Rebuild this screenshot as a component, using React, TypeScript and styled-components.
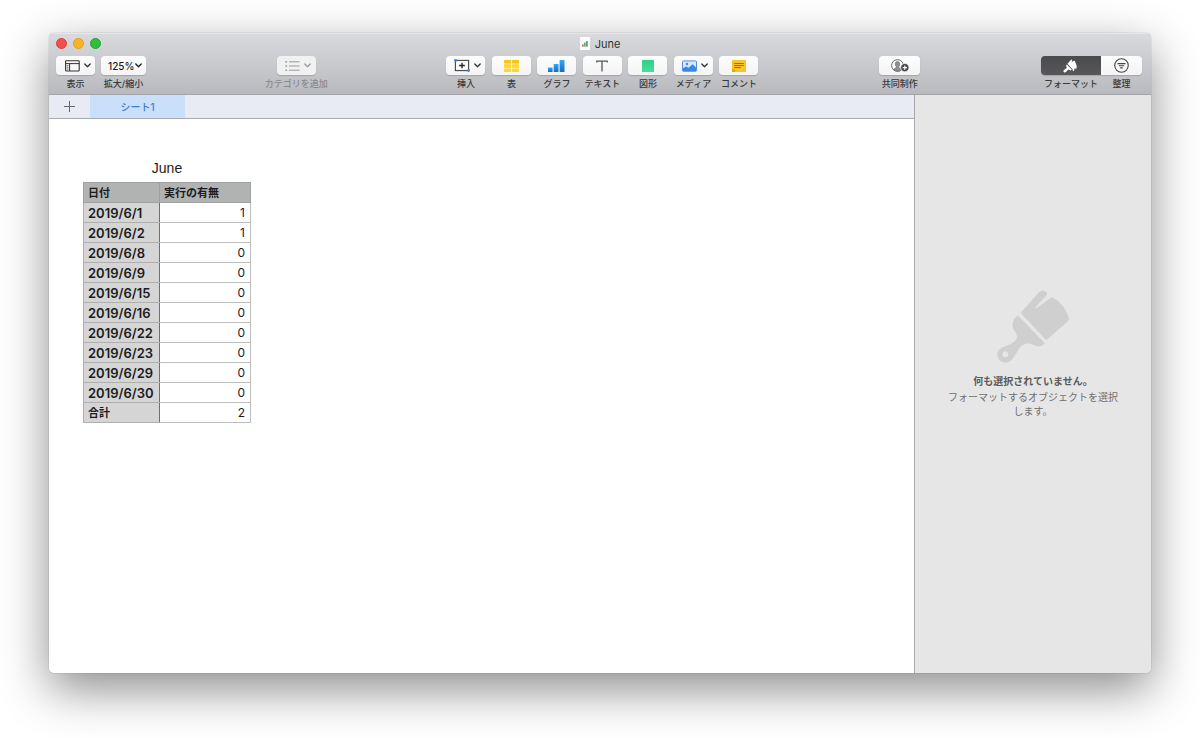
import React from "react";
import styled, { createGlobalStyle, css } from "styled-components";

const GlobalStyle = createGlobalStyle`
  *, *::before, *::after { box-sizing: border-box; }
  body {
    margin: 0;
    background: #fff;
    color: #1c1c1c;
    font-family: Inter, "Noto Sans CJK JP", sans-serif;
    -webkit-font-smoothing: antialiased;
  }
  button, select { font: inherit; color: inherit; }
`;

const Desktop = styled.div`
  display: flex;
  min-height: 100vh;
  padding: 33px 49px 65px;
`;

const AppWindow = styled.div`
  flex: 1;
  min-width: 0;
  display: flex;
  flex-direction: column;
  overflow: hidden;
  border-radius: 5px;
  background: #fff;
  box-shadow: 0 0 1px rgba(0, 0, 0, 0.5), 0 16px 48px rgba(0, 0, 0, 0.46);
`;

const WindowHeader = styled.header`
  display: flex;
  flex-direction: column;
  border-bottom: 1px solid #a3a4a8;
  background: linear-gradient(#d9dadd, #b9babf);
  box-shadow: inset 0 1px 0 #e6e7e9;
`;

const TitleBar = styled.div`
  display: grid;
  grid-template-columns: 1fr auto 1fr;
  align-items: center;
  height: 21px;
  padding: 0 7px;
`;

const TrafficLights = styled.div`
  display: flex;
  gap: 6px;
`;

const Light = styled.button<{ $fill: string; $edge: string }>`
  width: 11px;
  height: 11px;
  padding: 0;
  border: 1px solid ${(p) => p.$edge};
  border-radius: 50%;
  background: ${(p) => p.$fill};
`;

const DocumentTitle = styled.h1`
  display: flex;
  align-items: center;
  gap: 5px;
  margin: 0;
  font-size: 11px;
  line-height: 14px;
  font-weight: 400;
  color: #333;
`;

const Toolbar = styled.div`
  display: flex;
  justify-content: space-between;
  height: 40px;
  padding: 2px 9px 0 7px;
`;

const ToolGroup = styled.div<{ $joined?: boolean }>`
  display: flex;
  gap: ${(p) => (p.$joined ? 0 : 6)}px;
  margin-left: ${(p) => (p.$joined ? 2 : 0)}px;
`;

const InsertGroup = styled.div`
  display: flex;
  justify-content: space-between;
  width: 312px;
  margin-right: 2px;
`;

const toolItem = css`
  display: flex;
  flex-direction: column;
  align-items: center;
  gap: 2px;
  padding: 0;
  border: 0;
  background: none;
`;

const ToolButton = styled.button<{ $width?: number }>`
  ${toolItem}
  width: ${(p) => (p.$width ? `${p.$width}px` : "auto")};
`;

const ToolField = styled.label`
  ${toolItem}
  position: relative;
`;

const faceStyle = css`
  height: 19px;
  border: 0;
  border-radius: 4px;
  background: linear-gradient(#fdfdfd, #f4f4f5);
  box-shadow: 0 1px 1px rgba(0, 0, 0, 0.16);
`;

type Side = "left" | "right";

const Face = styled.span<{ $width: number; $menu?: boolean; $active?: boolean; $faded?: boolean; $side?: Side }>`
  ${faceStyle}
  display: flex;
  align-items: center;
  justify-content: center;
  gap: 4px;
  width: ${(p) => p.$width}px;
  padding-left: ${(p) => (p.$menu ? 4 : 0)}px;
  color: #333;
  ${(p) => p.$faded && css`color: #9b9b9d; background: #f1f1f2;`}
  ${(p) => p.$active && css`color: #fff; background: linear-gradient(#4b4b4e, #57575a);`}
  ${(p) => p.$side === "left" && css`border-radius: 4px 0 0 4px;`}
  ${(p) => p.$side === "right" && css`border-radius: 0 4px 4px 0;`}
`;

const ZoomSelect = styled.select`
  ${faceStyle}
  appearance: none;
  width: 45px;
  padding: 0 0 0 7px;
  font-size: 10px;
  font-weight: 500;
`;

const SelectArrow = styled.span`
  position: absolute;
  top: 0;
  right: 4px;
  height: 19px;
  display: flex;
  align-items: center;
  pointer-events: none;
`;

const Caption = styled.span<{ $faded?: boolean }>`
  font-size: 9px;
  line-height: 14px;
  font-weight: 500;
  white-space: nowrap;
  color: ${(p) => (p.$faded ? "#88898c" : "#3a3a3c")};
`;

const Body = styled.div`
  flex: 1;
  display: flex;
`;

const Main = styled.main`
  flex: 1;
  min-width: 0;
  background: #fff;
`;

const SheetBar = styled.nav`
  display: flex;
  height: 24px;
  border-bottom: 1px solid #a9abb2;
  background: #e8ebf4;
`;

const AddSheet = styled.button`
  display: flex;
  align-items: center;
  justify-content: center;
  width: 41px;
  padding: 0;
  border: 0;
  background: none;
`;

const SheetTab = styled.button`
  width: 95px;
  padding: 0;
  border: 0;
  background: #cadffa;
  color: #3f7cc8;
  font-size: 10px;
  font-weight: 500;
`;

const Canvas = styled.div`
  padding: 40px 34px;
`;

const SheetTable = styled.table`
  border-collapse: collapse;
  table-layout: fixed;
  width: 167px;
  font-size: 12px;
  line-height: 16px;

  caption {
    padding-bottom: 5px;
    font-family: "Liberation Sans", Arial, sans-serif;
    font-size: 14px;
    line-height: 18px;
  }
`;

const ColumnHead = styled.th<{ $width: number }>`
  width: ${(p) => p.$width}px;
  height: 20px;
  padding: 0 4px;
  border: 1px solid #a0a2a1;
  background: #b0b3b2;
  text-align: left;
  font-size: 11px;
  font-weight: 700;
`;

const RowHead = styled.th<{ $label?: boolean }>`
  height: 20px;
  padding: 0 4px;
  border: 1px solid #b0b0b0;
  border-right-color: #707070;
  background: #d5d5d5;
  text-align: left;
  white-space: nowrap;
  font-size: ${(p) => (p.$label ? 11 : 13)}px;
  font-weight: ${(p) => (p.$label ? 700 : 600)};
`;

const Cell = styled.td`
  height: 20px;
  padding: 0 5px;
  border: 1px solid #bdbdbd;
  text-align: right;
`;

const Inspector = styled.aside`
  display: flex;
  flex-direction: column;
  align-items: center;
  width: 237px;
  padding: 194px 32px 0;
  border-left: 1px solid #a9a9ab;
  background: #e6e6e6;
  text-align: center;
  font-size: 10px;
  line-height: 14px;
  color: #6f6f6f;
`;

const InspectorTitle = styled.h2`
  margin: 10px 0 2px;
  font-size: 10px;
  line-height: 14px;
  font-weight: 700;
  color: #5c5c5c;
`;

const InspectorText = styled.p`
  margin: 0;
`;

const Chevron = () => (
  <svg width="7" height="5" viewBox="0 0 7 5" fill="none" stroke="currentColor" strokeWidth="1.3" strokeLinecap="round" strokeLinejoin="round">
    <path d="M.8 1 3.5 3.8 6.2 1" />
  </svg>
);

const DocumentIcon = () => (
  <svg width="10" height="13" viewBox="0 0 10 13">
    <rect width="10" height="13" rx="0.6" fill="#fbfbfb" />
    <path d="M2 9V7.4h1.7V9z" fill="#e0604a" />
    <path d="M4 9V5.6h1.7V9z" fill="#4f9fd0" />
    <path d="M6 9V4h1.8v5z" fill="#58ae5e" />
    <path d="M2 9.4h6" stroke="#a8805a" strokeWidth=".6" />
  </svg>
);

const ViewIcon = () => (
  <svg width="15" height="12" viewBox="0 0 15 12" fill="none" stroke="currentColor">
    <rect x=".6" y=".8" width="13.6" height="10.2" rx=".8" strokeWidth="1.1" />
    <path d="M.6 3.6h13.6M4.6 3.6V11" strokeWidth="1" />
    <path d="M1.8 5.6h1.6M1.8 7.3h1.6M1.8 9h1.6" strokeWidth=".7" />
  </svg>
);

const CategoryIcon = () => (
  <svg width="15" height="12" viewBox="0 0 15 12" fill="none" stroke="currentColor" strokeWidth="1">
    <path d="M4 1.8h10.6M4 6h10.6M4 10.2h10.6" />
    <path d="M.3 1.8h1.8M.3 6h1.8M.3 10.2h1.8" strokeWidth="1.6" />
  </svg>
);

const InsertIcon = () => (
  <svg width="16" height="13" viewBox="0 0 16 13" fill="none">
    <rect x="1.4" y="1.4" width="13.2" height="10.2" stroke="#444" strokeWidth="1.1" />
    <path d="M8 3.7v5.6M5.2 6.5h5.6" stroke="#222" strokeWidth="1.3" />
    <circle cx="1.5" cy="1.5" r="1.4" fill="#3b82df" />
    <circle cx="14.5" cy="11.5" r="1.4" fill="#3b82df" />
  </svg>
);

const TableIcon = () => (
  <svg width="15" height="12" viewBox="0 0 15 12" fill="#ffd52e">
    <rect width="7.1" height="3.6" rx=".5" fill="#f8c41c" />
    <rect x="7.9" width="7.1" height="3.6" rx=".5" fill="#f8c41c" />
    <rect y="4.2" width="7.1" height="3.6" />
    <rect x="7.9" y="4.2" width="7.1" height="3.6" />
    <rect y="8.4" width="7.1" height="3.6" rx=".5" />
    <rect x="7.9" y="8.4" width="7.1" height="3.6" rx=".5" />
  </svg>
);

const ChartIcon = () => (
  <svg width="17" height="12" viewBox="0 0 17 12">
    <defs>
      <linearGradient id="chartBlue" x1="0" y1="0" x2="0" y2="1">
        <stop offset="0" stopColor="#35aaf0" />
        <stop offset="1" stopColor="#1768cb" />
      </linearGradient>
    </defs>
    <g fill="url(#chartBlue)">
      <rect x="0" y="7.5" width="4.6" height="4.5" rx=".5" />
      <rect x="5.7" y="4" width="4.8" height="8" rx=".5" />
      <rect x="11.6" y="0" width="4.9" height="12" rx=".5" />
    </g>
  </svg>
);

const TextIcon = () => (
  <svg width="12" height="12" viewBox="0 0 12 12" fill="none" stroke="#555" strokeWidth="1.3">
    <path d="M.8 2.6V1.2h10.4v1.4M6 1.2V11.4" />
  </svg>
);

const ShapeIcon = () => (
  <svg width="12" height="12" viewBox="0 0 12 12">
    <defs>
      <linearGradient id="shapeGreen" x1="0" y1="0" x2="0" y2="1">
        <stop offset="0" stopColor="#35cf86" />
        <stop offset="1" stopColor="#42e09a" />
      </linearGradient>
    </defs>
    <rect width="12" height="12" rx=".6" fill="url(#shapeGreen)" />
  </svg>
);

const MediaIcon = () => (
  <svg width="15" height="12" viewBox="0 0 15 12">
    <rect x=".5" y=".9" width="14" height="10.4" rx=".8" fill="#d5eafd" stroke="#4a8fe6" />
    <circle cx="5" cy="4" r="1.2" fill="#3f86e4" />
    <path d="M1 8.2 4 6.4l2.6 1.400 4-3.500 3.400 3.200V11H1z" fill="#3f86e4" />
  </svg>
);

const CommentIcon = () => (
  <svg width="14" height="12" viewBox="0 0 14 12">
    <path d="M.6 0h12.8q.6 0 .6.6v10.8q0 .6-.6.6H3L0 9.4V.6Q0 0 .6 0z" fill="#f9c42a" />
    <path d="M0 9.200h2.400q.6 0 .6.6V12H.6q-.6 0-.6-.6z" fill="#e2a81a" />
    <path d="M2.2 3.500h9.600M2.200 5.500h9.600M2.200 7.500h6.600" stroke="#94701a" strokeWidth="1" />
  </svg>
);

const CollaborateIcon = () => (
  <svg width="18" height="13" viewBox="0 0 18 13" fill="none">
    <circle cx="6.5" cy="6.5" r="5.9" stroke="#5c5c5e" strokeWidth=".9" />
    <path d="M2.6 10.6c.5-1.2 1.8-1.5 2.7-1.9l.1-.9C4.6 7 4.2 6 4.3 4.700 4.400 3.200 5.300 2.400 6.500 2.400s2.100.8 2.200 2.300C8.800 6 8.400 7 7.600 7.800l.1.9c.9.4 2.200.7 2.700 1.900-1.900 2-5.900 2-7.800 0z" fill="#8e8e90" stroke="#5c5c5e" strokeWidth=".5" />
    <circle cx="13.800" cy="8.600" r="4.200" fill="#4b4b4d" stroke="#fafafa" strokeWidth=".7" />
    <path d="M13.800 6.500v4.200M11.700 8.600h4.200" stroke="#fff" strokeWidth="1.100" />
  </svg>
);

const OrganizeIcon = () => (
  <svg width="15" height="15" viewBox="0 0 14 14" fill="none" stroke="#444" strokeWidth="1">
    <circle cx="7" cy="7" r="6.300" />
    <path d="M3.300 5.200h7.400M4.500 7.200h5M5.800 9.200h2.400" strokeWidth="1.100" />
  </svg>
);

const BrushIcon = ({ size, fill }: { size: number; fill: string }) => (
  <svg width={size} height={size} viewBox="0 0 225 225" fill={fill}>
    <path d="M77 68 129 10Q138 1 147 6l6 5q2 3-1 7l-33 36q-3 5 3 3l43-31q3-2 6 0c27 15 42 41 48 62q1 5-3 8l-62 55q-3 3-6 0L77 75q-3-3 0-7z" />
    <path
      fillRule="evenodd"
      d="M62 82q3-3 6 0l76 78q3 3 0 6c-10 8-20 8-30 3-14-9-31-7-39 3-9 11-15 23-24 36C40 225 18 224 9 211-1 197 5 182 17 176c15-7 30-10 40-21 8-9 7-17 1-25-12-15-11-33 4-48zM28 187a9 9 0 1 0 .1 18 9 9 0 0 0-.1-18z"
    />
  </svg>
);

const FormatIcon = () => (
  <svg width="15" height="14" viewBox="0 0 15 14" fill="#fff">
    <path d="M4.500 4.700 8 .7q.8-.6 1.200.2L8.700 3l2.200-1.300q.6-.2.900.3l1.900 4.800q.1 1.300-.4 3l-.9.200-.3-1.500-1.300 3.500-.9.100-.4-1.800z" />
    <path d="m3.900 5.500 4.900 5-1.300.9-2.300-.8-2.200 2.500q-1.300.9-2.200-.1-.9-1.100.2-2.100l2.700-2-.6-2.400z" />
  </svg>
);

const AddIcon = () => (
  <svg width="11" height="11" viewBox="0 0 11 11" stroke="#666" strokeWidth="1">
    <path d="M5.500 0v11M0 5.500h11" />
  </svg>
);

interface Tool {
  label: string;
  icon: React.ReactNode;
  menu?: boolean;
}

const insertTools: Tool[] = [
  { label: "挿入", icon: <InsertIcon />, menu: true },
  { label: "表", icon: <TableIcon /> },
  { label: "グラフ", icon: <ChartIcon /> },
  { label: "テキスト", icon: <TextIcon /> },
  { label: "図形", icon: <ShapeIcon /> },
  { label: "メディア", icon: <MediaIcon />, menu: true },
  { label: "コメント", icon: <CommentIcon /> },
];

const rows: [string, number][] = [
  ["2019/6/1", 1],
  ["2019/6/2", 1],
  ["2019/6/8", 0],
  ["2019/6/9", 0],
  ["2019/6/15", 0],
  ["2019/6/16", 0],
  ["2019/6/22", 0],
  ["2019/6/23", 0],
  ["2019/6/29", 0],
  ["2019/6/30", 0],
];

export default function App() {
  return (
    <Desktop>
      <GlobalStyle />
      <AppWindow>
        <WindowHeader>
          <TitleBar>
            <TrafficLights>
              <Light $fill="#f4504b" $edge="#dc403c" aria-label="閉じる" />
              <Light $fill="#fbb429" $edge="#e09d22" aria-label="しまう" />
              <Light $fill="#2fbf3c" $edge="#23a52f" aria-label="拡大" />
            </TrafficLights>
            <DocumentTitle>
              <DocumentIcon />
              June
            </DocumentTitle>
          </TitleBar>
          <Toolbar>
            <ToolGroup>
              <ToolButton $width={39} aria-haspopup="menu">
                <Face $width={39} $menu>
                  <ViewIcon />
                  <Chevron />
                </Face>
                <Caption>表示</Caption>
              </ToolButton>
              <ToolField>
                <ZoomSelect defaultValue="125%">
                  <option>100%</option>
                  <option>125%</option>
                  <option>150%</option>
                </ZoomSelect>
                <SelectArrow>
                  <Chevron />
                </SelectArrow>
                <Caption>拡大/縮小</Caption>
              </ToolField>
            </ToolGroup>
            <ToolButton disabled aria-haspopup="menu">
              <Face $width={39} $menu $faded>
                <CategoryIcon />
                <Chevron />
              </Face>
              <Caption $faded>カテゴリを追加</Caption>
            </ToolButton>
            <InsertGroup>
              {insertTools.map((tool) => (
                <ToolButton key={tool.label} $width={39} aria-haspopup={tool.menu ? "menu" : undefined}>
                  <Face $width={39} $menu={tool.menu}>
                    {tool.icon}
                    {tool.menu && <Chevron />}
                  </Face>
                  <Caption>{tool.label}</Caption>
                </ToolButton>
              ))}
            </InsertGroup>
            <ToolButton $width={41}>
              <Face $width={41}>
                <CollaborateIcon />
              </Face>
              <Caption>共同制作</Caption>
            </ToolButton>
            <ToolGroup $joined>
              <ToolButton $width={60} aria-pressed="true">
                <Face $width={60} $active $side="left">
                  <FormatIcon />
                </Face>
                <Caption>フォーマット</Caption>
              </ToolButton>
              <ToolButton $width={41} aria-pressed="false">
                <Face $width={41} $side="right">
                  <OrganizeIcon />
                </Face>
                <Caption>整理</Caption>
              </ToolButton>
            </ToolGroup>
          </Toolbar>
        </WindowHeader>
        <Body>
          <Main>
            <SheetBar>
              <AddSheet aria-label="シートを追加">
                <AddIcon />
              </AddSheet>
              <SheetTab>シート1</SheetTab>
            </SheetBar>
            <Canvas>
              <SheetTable>
                <caption>June</caption>
                <thead>
                  <tr>
                    <ColumnHead scope="col" $width={76}>日付</ColumnHead>
                    <ColumnHead scope="col" $width={91}>実行の有無</ColumnHead>
                  </tr>
                </thead>
                <tbody>
                  {rows.map(([date, done]) => (
                    <tr key={date}>
                      <RowHead scope="row">{date}</RowHead>
                      <Cell>{done}</Cell>
                    </tr>
                  ))}
                </tbody>
                <tfoot>
                  <tr>
                    <RowHead scope="row" $label>合計</RowHead>
                    <Cell>2</Cell>
                  </tr>
                </tfoot>
              </SheetTable>
            </Canvas>
          </Main>
          <Inspector>
            <BrushIcon size={75} fill="#cfcfcf" />
            <InspectorTitle>何も選択されていません。</InspectorTitle>
            <InspectorText>フォーマットするオブジェクトを選択します。</InspectorText>
          </Inspector>
        </Body>
      </AppWindow>
    </Desktop>
  );
}
